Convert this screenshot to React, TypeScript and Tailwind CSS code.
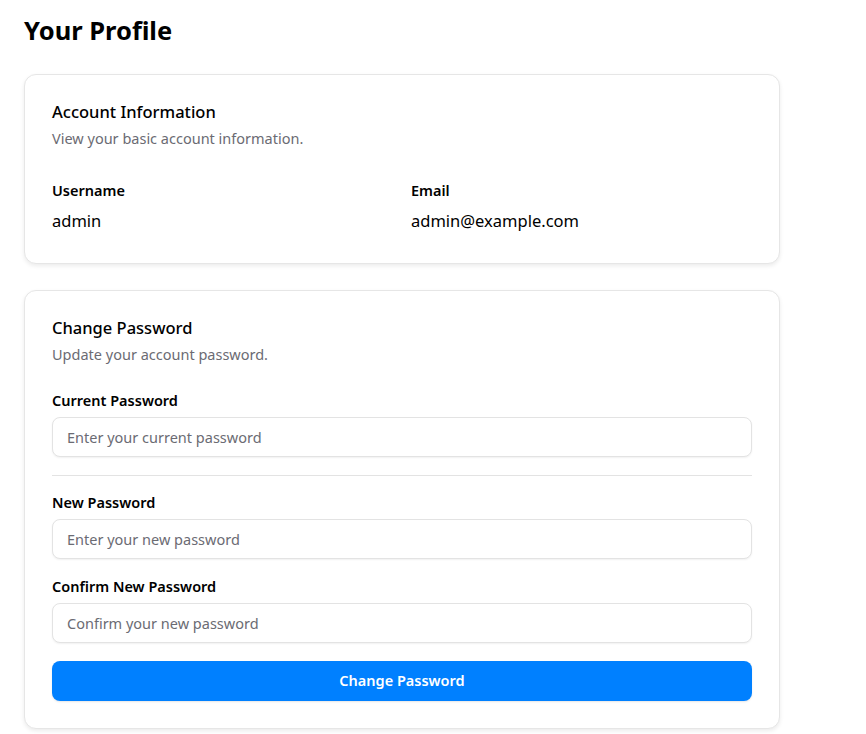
import { useState } from "react";

function Field({
  label,
  placeholder,
  value,
  onChange,
}: {
  label: string;
  placeholder: string;
  value: string;
  onChange: (v: string) => void;
}) {
  return (
    <div className="flex flex-col gap-[7px]">
      <label className="text-[14.5px] font-semibold leading-5 text-black">{label}</label>
      <input
        type="password"
        value={value}
        onChange={(e) => onChange(e.target.value)}
        placeholder={placeholder}
        className="h-10 w-full rounded-lg border border-[#e3e3e3] bg-white px-[14px] text-[14.5px] text-black shadow-[0_1px_2px_rgba(0,0,0,0.06)] outline-none placeholder:text-[#6b6b73]"
      />
    </div>
  );
}

export default function App() {
  const [current, setCurrent] = useState("");
  const [next, setNext] = useState("");
  const [confirm, setConfirm] = useState("");

  return (
    <div className="min-h-screen bg-white px-6 pt-[14px] pb-6 font-['Noto_Sans',sans-serif] text-black">
      <h1 className="text-[25.5px] font-bold leading-8">Your Profile</h1>

      <div className="mt-[28px] flex w-[756px] flex-col gap-[26px]">
        {/* 基本資料 */}
        <section className="rounded-xl border border-[#e6e6e6] bg-white px-[27px] pt-[25px] pb-[30px] shadow-[0_2px_4px_rgba(0,0,0,0.08)]">
          <h2 className="text-[16.5px] font-medium leading-6">Account Information</h2>
          <p className="mt-[4px] text-[14.5px] leading-5 text-[#6b6b73]">
            View your basic account information.
          </p>
          <div className="mt-[32px] grid grid-cols-2 gap-x-[18px]">
            <div className="flex flex-col gap-[9px]">
              <span className="text-[14.5px] font-semibold leading-5">Username</span>
              <span className="text-[16.5px] leading-6">admin</span>
            </div>
            <div className="flex flex-col gap-[9px]">
              <span className="text-[14.5px] font-semibold leading-5">Email</span>
              <span className="text-[16.5px] leading-6">admin@example.com</span>
            </div>
          </div>
        </section>

        {/* 改密碼 */}
        <section className="rounded-xl border border-[#e6e6e6] bg-white px-[27px] pt-[25px] pb-[27px] shadow-[0_2px_4px_rgba(0,0,0,0.08)]">
          <h2 className="text-[16.5px] font-medium leading-6">Change Password</h2>
          <p className="mt-[4px] text-[14.5px] leading-5 text-[#6b6b73]">
            Update your account password.
          </p>
          <div className="mt-[26px] flex flex-col">
            <Field
              label="Current Password"
              placeholder="Enter your current password"
              value={current}
              onChange={setCurrent}
            />
            <hr className="mt-[18px] mb-[16px] border-[#e3e3e3]" />
            <div className="flex flex-col gap-[17px]">
              <Field
                label="New Password"
                placeholder="Enter your new password"
                value={next}
                onChange={setNext}
              />
              <Field
                label="Confirm New Password"
                placeholder="Confirm your new password"
                value={confirm}
                onChange={setConfirm}
              />
            </div>
            <button className="mt-[18px] h-10 w-full rounded-lg bg-[#0080ff] text-[14.5px] font-semibold text-white shadow-[0_1px_2px_rgba(0,0,0,0.1)]">
              Change Password
            </button>
          </div>
        </section>
      </div>
    </div>
  );
}
